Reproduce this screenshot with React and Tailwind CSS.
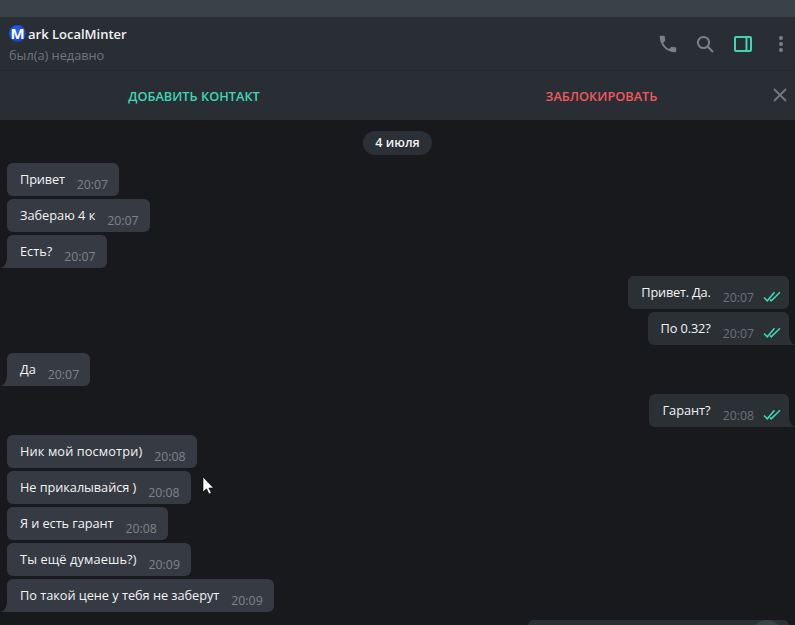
const font = { fontFamily: '"Open Sans", sans-serif' };

function Checks() {
  return (
    <svg width="18" height="11" viewBox="0 0 18 11" fill="none" stroke="#3fd6b5" strokeWidth="1.6" className="ml-[9px] mt-[8px] shrink-0">
      <path d="M1 6.5 L4.3 9.8 L11.5 1.2" />
      <path d="M7 8.5 L8.2 9.8 L17 1.2" />
    </svg>
  );
}

function TailLeft() {
  return (
    <svg width="7" height="10" viewBox="0 0 7 10" className="absolute left-[-6px] bottom-0">
      <path d="M7 0 V10 H0 C3 9 5.5 6 6 0 Z" fill="#363b43" />
    </svg>
  );
}

function TailRight() {
  return (
    <svg width="7" height="10" viewBox="0 0 7 10" className="absolute right-[-6px] bottom-0">
      <path d="M0 0 V10 H7 C4 9 1.5 6 1 0 Z" fill="#2b3034" />
    </svg>
  );
}

function In({ text, time, tail, track = "" }) {
  return (
    <div className={`relative self-start ml-[7px] h-[33px] rounded-[6px] bg-[#363b43] pl-[13px] pr-[11px] pt-[7px] flex items-start text-[12.75px] leading-[18px] ${tail ? "rounded-bl-none" : ""}`}>
      <span className={`text-[#f2f3f4] whitespace-nowrap ${track}`}>{text}</span>
      <span className="ml-[12px] text-[#7e848b] mt-[6px] whitespace-nowrap text-[12.3px]">{time}</span>
      {tail && <TailLeft />}
    </div>
  );
}

function Out({ text, time, tail, track = "" }) {
  return (
    <div className={`relative self-end mr-[6px] h-[33px] rounded-[6px] bg-[#2b3034] pl-[13px] pr-[8px] pt-[7px] flex items-start text-[12.75px] leading-[18px] ${tail ? "rounded-br-none" : ""}`}>
      <span className={`text-[#f2f3f4] whitespace-nowrap ${track}`}>{text}</span>
      <span className="text-[#6c7278] ml-[12px] mt-[6px] whitespace-nowrap text-[12.3px]">{time}</span>
      <Checks />
      {tail && <TailRight />}
    </div>
  );
}

function Group({ children }) {
  return <div className="flex flex-col gap-[3px]">{children}</div>;
}

export default function App() {
  return (
    <div style={font} className="relative h-[625px] w-[795px] overflow-hidden bg-[#18191d] flex flex-col">
      <div className="h-[17px] shrink-0 bg-[#3a4249]" />

      <header className="h-[54px] shrink-0 bg-[#292e35] border-b border-[#25292f] flex items-center justify-between pl-[9px] pr-[7px]">
        <div className="flex flex-col pt-[1px]">
          <div className="flex items-center h-[18px]">
            <span className="w-[17px] h-[17px] rounded-full bg-[radial-gradient(circle_at_40%_35%,#2a62f5,#0b36c4)] flex items-center justify-center text-white text-[15px] font-bold leading-none">M</span>
            <span className="ml-[2px] text-[13px] font-semibold text-[#f0f1f2] leading-[18px]">ark LocalMinter</span>
          </div>
          <span className="text-[12.75px] text-[#71767c] leading-[18px] mt-[3px]">был(а) недавно</span>
        </div>
        <div className="flex items-center">
          <svg width="22" height="22" viewBox="0 0 24 24" fill="#7c8085" className="mr-[17px]">
            <path d="M6.62 10.79c1.44 2.83 3.76 5.14 6.59 6.59l2.2-2.2c.27-.27.67-.36 1.02-.24 1.12.37 2.33.57 3.57.57.55 0 1 .45 1 1V20c0 .55-.45 1-1 1-9.39 0-17-7.61-17-17 0-.55.45-1 1-1h3.5c.55 0 1 .45 1 1 0 1.25.2 2.45.57 3.57.11.35.03.74-.25 1.02l-2.2 2.2z" />
          </svg>
          <svg width="18" height="18" viewBox="0 0 18 18" fill="none" stroke="#7c8085" strokeWidth="2" className="mr-[20px]">
            <circle cx="7.5" cy="7.5" r="5.6" />
            <path d="M11.8 11.8 L17 17" />
          </svg>
          <svg width="18" height="16" viewBox="0 0 18 16" fill="none" stroke="#3fd6b5" strokeWidth="2" className="mr-[27px]">
            <rect x="1" y="1" width="16" height="14" rx="1" />
            <path d="M12.5 1 V15" />
          </svg>
          <svg width="4" height="16" viewBox="0 0 4 16" fill="#7c8085" className="mr-[5px]">
            <circle cx="2" cy="2" r="2" />
            <circle cx="2" cy="8" r="2" />
            <circle cx="2" cy="14" r="2" />
          </svg>
        </div>
      </header>

      <div className="relative h-[49px] shrink-0 bg-[#292e35] flex items-center pt-[2px] text-[12.75px] font-semibold">
        <div className="w-[388px] shrink-0 text-center text-[#3fd6b5]">ДОБАВИТЬ КОНТАКТ</div>
        <div className="w-[427px] shrink-0 text-center text-[#f0595f]">ЗАБЛОКИРОВАТЬ</div>
        <svg width="14" height="14" viewBox="0 0 14 14" stroke="#74787d" strokeWidth="1.8" className="absolute right-[8px] top-[17px]">
          <path d="M1 1 L13 13 M13 1 L1 13" />
        </svg>
      </div>

      <main className="flex-1 flex flex-col gap-[8px] pt-[11px]">
        <div className="self-center h-[24px] rounded-full bg-[#2b3036] px-[12px] flex items-center text-[12.5px] font-semibold text-[#f0f1f2]">4 июля</div>
        <Group>
          <In text="Привет" time="20:07" track="tracking-[-0.15px]" />
          <In text="Забераю 4 к" time="20:07" />
          <In text="Есть?" time="20:07" tail />
        </Group>
        <Group>
          <Out text="Привет. Да." time="20:07" track="tracking-[-0.2px]" />
          <Out text="По 0.32?" time="20:07" track="tracking-[-0.12px]" tail />
        </Group>
        <Group>
          <In text="Да" time="20:07" tail />
        </Group>
        <Group>
          <Out text="Гарант?" time="20:08" tail />
        </Group>
        <Group>
          <In text="Ник мой посмотри)" time="20:08" track="tracking-[0.12px]" />
          <In text="Не прикалывайся )" time="20:08" track="tracking-[-0.06px]" />
          <In text="Я и есть гарант" time="20:08" track="tracking-[-0.07px]" />
          <In text="Ты ещё думаешь?)" time="20:09" track="tracking-[0.12px]" />
          <In text="По такой цене у тебя не заберут" time="20:09" track="tracking-[-0.03px]" tail />
        </Group>
        <div className="self-end mr-[6px] w-[261px] h-[33px] rounded-[6px] bg-[#2b3034] relative shrink-0">
          <div className="absolute right-[6px] top-0 w-[32px] h-[32px] rounded-full bg-[#3a4249]" />
        </div>
      </main>

      <svg width="13" height="20" viewBox="0 0 13 20" className="absolute left-[202px] top-[476px]">
        <path d="M1 1 V16 L4.5 12.8 L7 18 L9.3 17 L6.9 12 L11.5 12 Z" fill="#fff" stroke="#000" strokeWidth="0.6" />
      </svg>
    </div>
  );
}
